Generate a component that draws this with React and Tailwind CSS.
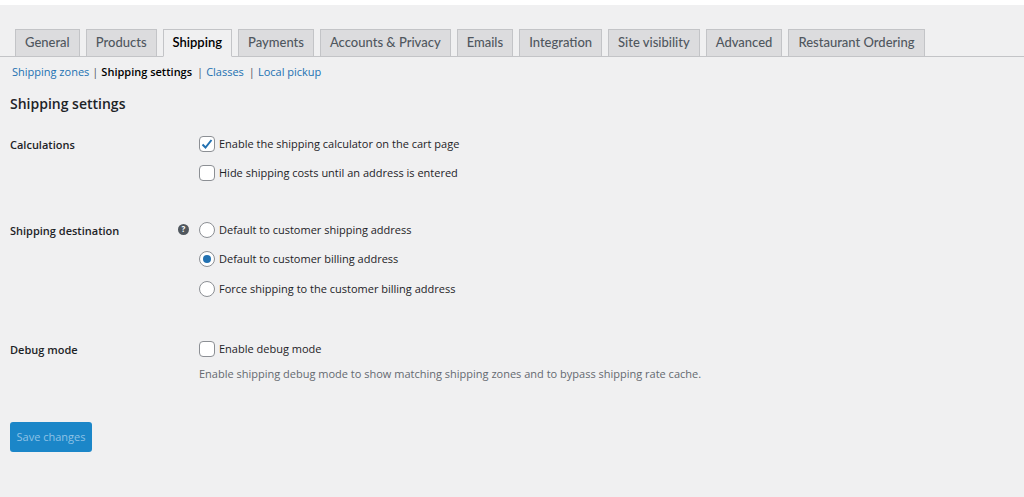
export default function App() {
  const tabs = ["General","Products","Shipping","Payments","Accounts & Privacy","Emails","Integration","Site visibility","Advanced","Restaurant Ordering"];
  const Check = ({ on }) => (
    <span className="w-4 h-4 rounded-[4px] border border-[#8c8f94] bg-white flex items-center justify-center shrink-0">
      {on && <svg width="14" height="14" viewBox="0 0 14 14"><path d="M2.5 7.5l3 3 6-7.5" fill="none" stroke="#2271b1" strokeWidth="2"/></svg>}
    </span>
  );
  const Radio = ({ on }) => (
    <span className="w-4 h-4 rounded-full border border-[#8c8f94] bg-white flex items-center justify-center shrink-0">
      {on && <span className="w-2 h-2 rounded-full bg-[#2271b1]" />}
    </span>
  );
  return (
    <div className="w-[1024px] h-[497px] bg-[#f0f0f1] text-[#1d2327] text-[13px] overflow-hidden" style={{ fontFamily: '"Open Sans","Noto Sans",sans-serif' }}>
      <div className="h-[5px] bg-white" />
      <div className="flex gap-[6px] pl-[15px] pt-[23px] border-b border-[#c3c4c7] h-[52px] items-end">
        {tabs.map(t => (
          <div key={t} style={{ fontFamily: 'Lato,"Noto Sans",sans-serif' }} className={`px-[9px] h-[28px] flex items-center text-[13px] font-medium border border-[#c3c4c7] -mb-px ${t === "Shipping" ? "bg-[#f0f0f1] border-b-[#f0f0f1] text-black font-semibold" : "bg-[#dcdcde] text-[#50575e]"}`}>{t}</div>
        ))}
      </div>
      <div className="pl-[12px] pt-[7px] text-[11px] flex gap-[3px]">
        <span className="text-[#2271b1]">Shipping zones</span>
        <span className="text-[#50575e]">|</span><span className="font-semibold text-black">Shipping settings</span>
        <span className="text-[#50575e] ml-[2px]">|</span><span className="text-[#2271b1]">Classes</span>
        <span className="text-[#50575e] ml-[2px]">|</span><span className="text-[#2271b1]">Local pickup</span>
      </div>
      <div className="pl-[10px] pt-[12px] text-[14px] font-semibold">Shipping settings</div>
      <div className="pl-[10px] pt-[22px]">
        <div className="flex">
          <div className="w-[189px] font-semibold text-[11px] pt-[1px]">Calculations</div>
          <div className="flex flex-col gap-[13px] text-[11px]">
            <div className="flex items-center gap-[4px]"><Check on /><span>Enable the shipping calculator on the cart page</span></div>
            <div className="flex items-center gap-[4px]"><Check /><span>Hide shipping costs until an address is entered</span></div>
          </div>
        </div>
        <div className="flex mt-[40px]">
          <div className="w-[168px] font-semibold text-[11px] pt-[1px]">Shipping destination</div>
          <div className="w-[21px] pt-[2px]"><span className="w-[11px] h-[11px] rounded-full bg-[#50575e] text-white text-[8px] font-bold flex items-center justify-center">?</span></div>
          <div className="flex flex-col gap-[13px] text-[11px]">
            <div className="flex items-center gap-[4px]"><Radio /><span>Default to customer shipping address</span></div>
            <div className="flex items-center gap-[4px]"><Radio on /><span>Default to customer billing address</span></div>
            <div className="flex items-center gap-[4px]"><Radio /><span>Force shipping to the customer billing address</span></div>
          </div>
        </div>
        <div className="flex mt-[44px]">
          <div className="w-[189px] font-semibold text-[11px] pt-[1px]">Debug mode</div>
          <div className="flex flex-col gap-[8px] text-[11px]">
            <div className="flex items-center gap-[4px]"><Check /><span>Enable debug mode</span></div>
            <div className="text-[#646970]">Enable shipping debug mode to show matching shipping zones and to bypass shipping rate cache.</div>
          </div>
        </div>
        <div className="mt-[40px] w-[82px] h-[30px] rounded-[3px] bg-[#1b86c8] text-[#8ec2e6] text-[11px] flex items-center justify-center">Save changes</div>
      </div>
    </div>
  );
}
